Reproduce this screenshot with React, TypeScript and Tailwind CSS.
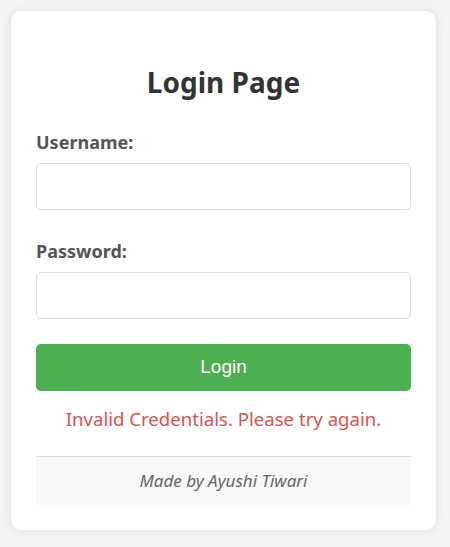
export default function App() {
  return (
    <div className="min-h-[547px] bg-[#f4f4f4] pt-[11px] px-[11px] pb-4 font-['Noto_Sans',sans-serif]">
      <div className="w-[425px] rounded-[10px] bg-white px-[25px] pb-[25px] pt-[29px] shadow-[0_0_10px_rgba(0,0,0,0.1)]">
        <h2 className="mt-[25px] mb-[31px] text-center text-[28px] leading-[34px] font-bold text-[#333]">
          Login Page
        </h2>

        <form className="flex flex-col" onSubmit={(e) => e.preventDefault()}>
          <label className="mb-[9px] text-[18px] leading-[24px] font-bold text-[#555]">Username:</label>
          <input
            type="text"
            className="mb-[29px] h-[47px] w-full rounded-[5px] border border-[#ddd] px-3 outline-none"
          />

          <label className="mb-[9px] text-[18px] leading-[24px] font-bold text-[#555]">Password:</label>
          <input
            type="password"
            className="mb-[25px] h-[47px] w-full rounded-[5px] border border-[#ddd] px-3 outline-none"
          />

          <button className="h-[47px] w-full rounded-[5px] bg-[#4caf50] font-['Liberation_Sans',sans-serif] text-[19px] text-white">
            Login
          </button>
        </form>

        <p className="mt-[16px] text-center text-[18.6px] leading-[24px] text-[#d9534f]">
          Invalid Credentials. Please try again.
        </p>

        <div className="mt-[25px] h-[49px] border-t border-[#ddd] bg-[#f8f8f8] flex items-center justify-center">
          <span className="text-[17px] italic text-[#666]">Made by Ayushi Tiwari</span>
        </div>
      </div>
    </div>
  );
}
